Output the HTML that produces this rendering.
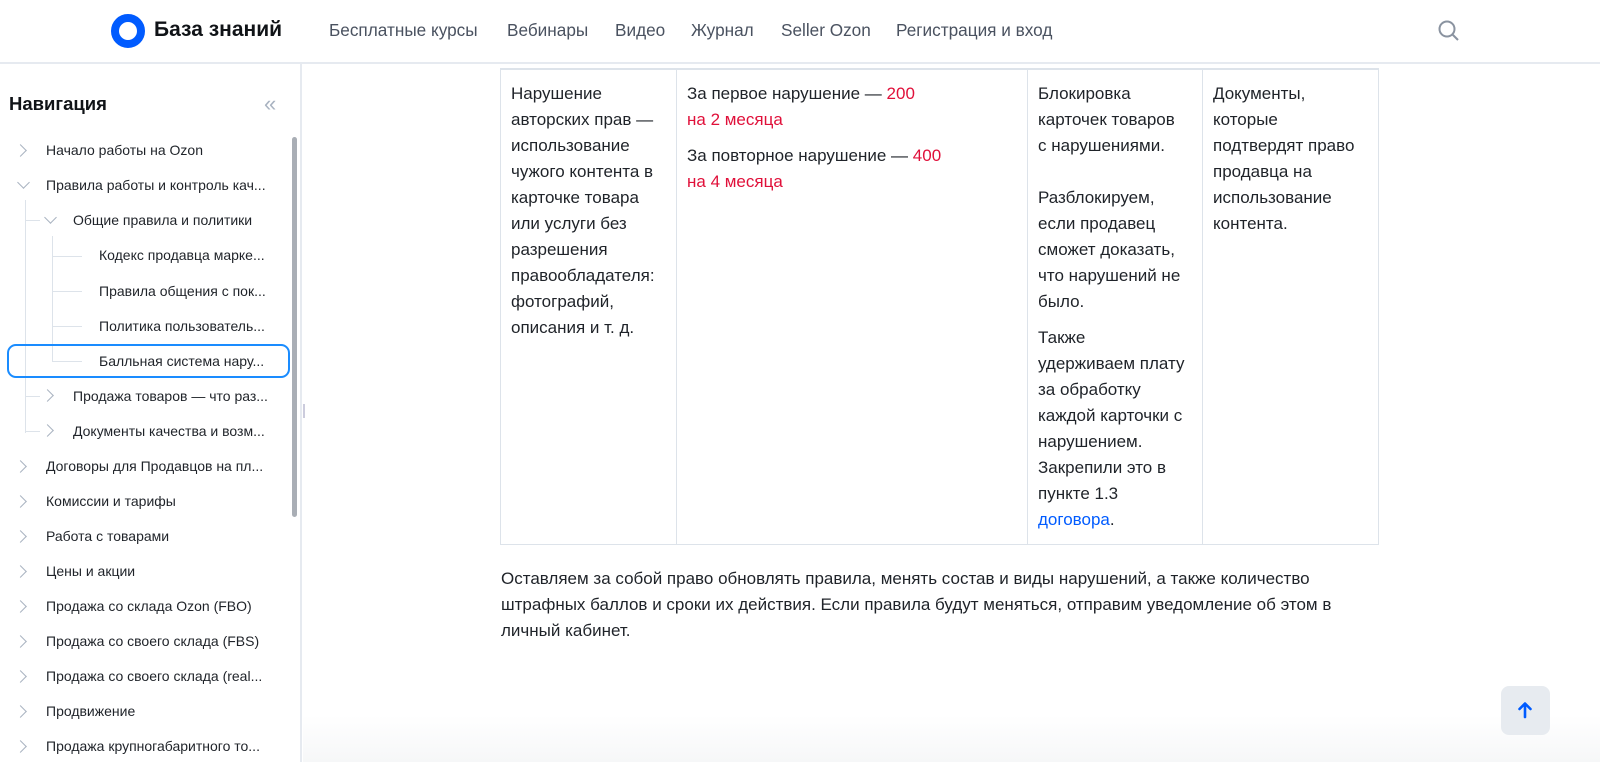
<!DOCTYPE html><html><head><meta charset="utf-8"><style>
*{margin:0;padding:0;box-sizing:border-box}
body{width:1600px;height:762px;overflow:hidden;background:#fff;font-family:"Liberation Sans",sans-serif;color:#1f2329;position:relative}
.hdr{position:absolute;left:0;top:0;width:1600px;height:64px;border-bottom:2px solid #e6eaf0;background:#fff}
.logo{position:absolute;left:111px;top:14px;width:34px;height:34px;border-radius:50%;border:8px solid #005bff}
.brand{position:absolute;left:154px;top:18px;font-size:21px;font-weight:bold;color:#101317}
.nav a{position:absolute;top:20px;font-size:17.2px;color:#4a5260;text-decoration:none;white-space:nowrap}
.side{position:absolute;left:0;top:64px;width:302px;height:698px;border-right:2px solid #e6eaf0}
.side h3{position:absolute;left:9px;top:29px;font-size:18.5px;font-weight:bold;color:#101317}
.it{position:absolute;font-size:14px;color:#1f2329;white-space:nowrap}
.chev{position:absolute;width:9px;height:9px;border-right:1.8px solid #a9b3c1;border-bottom:1.8px solid #a9b3c1}
.r{transform:rotate(-45deg)}.d{transform:rotate(45deg)}
.vl{position:absolute;border-left:1px solid #dde3ea}.hl{position:absolute;border-top:1px solid #dde3ea}
.tbl{position:absolute;left:500px;top:68px;width:879px;height:477px;border:1px solid #dde3ea;border-top:2px solid #dde3ea}
.c{position:absolute;top:0;height:100%;border-right:1px solid #dde3ea;padding:11px 10px;font-size:17px;line-height:26px;white-space:nowrap}
.red{color:#e0103a}.blue{color:#005bff}
p.t{position:absolute;left:501px;top:566px;font-size:17px;line-height:26px;white-space:nowrap}
</style></head><body>
<div class="hdr"><div class="logo"></div><div class="brand">База знаний</div>
<div class="nav"><a style="left:329px">Бесплатные курсы</a><a style="left:507px">Вебинары</a><a style="left:615px">Видео</a><a style="left:691px">Журнал</a><a style="left:781px">Seller Ozon</a><a style="left:896px">Регистрация и вход</a></div>
<svg style="position:absolute;left:1437px;top:19px" width="24" height="24" viewBox="0 0 24 24" fill="none" stroke="#8a93a0" stroke-width="2"><circle cx="10" cy="10" r="7.5"/><path d="M15.5 15.5L21 21"/></svg>
</div>
<div class="side"><h3>Навигация</h3>
<div style="position:absolute;left:264px;top:27px;font-size:22px;color:#a9b3c1">«</div>
<div style="position:absolute;left:292px;top:73px;width:5px;height:380px;background:#a9aeb5;border-radius:3px"></div>
</div>
<div class="vl" style="left:25px;top:200px;height:233px"></div>
<div class="vl" style="left:52px;top:236px;height:126px"></div>
<div class="hl" style="left:25px;top:220px;width:15px"></div>
<div class="hl" style="left:52px;top:256px;width:30px"></div>
<div class="hl" style="left:52px;top:291px;width:30px"></div>
<div class="hl" style="left:52px;top:326px;width:30px"></div>
<div class="hl" style="left:52px;top:361px;width:30px"></div>
<div class="hl" style="left:25px;top:396px;width:15px"></div>
<div class="hl" style="left:25px;top:431px;width:15px"></div>
<div style="position:absolute;left:7px;top:344px;width:283px;height:34px;border:2px solid #1a8cff;border-radius:9px"></div>
<div class="chev r" style="left:16px;top:146px"></div><div class="it" style="left:46px;top:142px">Начало работы на Ozon</div>
<div class="chev d" style="left:19px;top:178px"></div><div class="it" style="left:46px;top:177px">Правила работы и контроль кач...</div>
<div class="chev d" style="left:46px;top:213px"></div><div class="it" style="left:73px;top:212px">Общие правила и политики</div>
<div class="it" style="left:99px;top:247px">Кодекс продавца марке...</div>
<div class="it" style="left:99px;top:283px">Правила общения с пок...</div>
<div class="it" style="left:99px;top:318px">Политика пользователь...</div>
<div class="it" style="left:99px;top:353px">Балльная система нару...</div>
<div class="chev r" style="left:43px;top:391px"></div><div class="it" style="left:73px;top:388px">Продажа товаров — что раз...</div>
<div class="chev r" style="left:43px;top:426px"></div><div class="it" style="left:73px;top:423px">Документы качества и возм...</div>
<div class="chev r" style="left:16px;top:462px"></div><div class="it" style="left:46px;top:458px">Договоры для Продавцов на пл...</div>
<div class="chev r" style="left:16px;top:497px"></div><div class="it" style="left:46px;top:493px">Комиссии и тарифы</div>
<div class="chev r" style="left:16px;top:532px"></div><div class="it" style="left:46px;top:528px">Работа с товарами</div>
<div class="chev r" style="left:16px;top:567px"></div><div class="it" style="left:46px;top:563px">Цены и акции</div>
<div class="chev r" style="left:16px;top:602px"></div><div class="it" style="left:46px;top:598px">Продажа со склада Ozon (FBO)</div>
<div class="chev r" style="left:16px;top:637px"></div><div class="it" style="left:46px;top:633px">Продажа со своего склада (FBS)</div>
<div class="chev r" style="left:16px;top:672px"></div><div class="it" style="left:46px;top:668px">Продажа со своего склада (real...</div>
<div class="chev r" style="left:16px;top:707px"></div><div class="it" style="left:46px;top:703px">Продвижение</div>
<div class="chev r" style="left:16px;top:742px"></div><div class="it" style="left:46px;top:738px">Продажа крупногабаритного то...</div>
<div style="position:absolute;left:303px;top:404px;width:2px;height:14px;border-left:1px solid #ccd;border-right:1px solid #ccd"></div>
<div class="tbl">
<div class="c" style="left:0;width:176px">Нарушение<br>авторских прав —<br>использование<br>чужого контента в<br>карточке товара<br>или услуги без<br>разрешения<br>правообладателя:<br>фотографий,<br>описания и т. д.</div>
<div class="c" style="left:176px;width:351px">За первое нарушение — <span class="red">200</span><br><span class="red">на 2 месяца</span><div style="height:10px"></div>За повторное нарушение — <span class="red">400</span><br><span class="red">на 4 месяца</span></div>
<div class="c" style="left:527px;width:175px">Блокировка<br>карточек товаров<br>с нарушениями.<br><br>Разблокируем,<br>если продавец<br>сможет доказать,<br>что нарушений не<br>было.<div style="height:10px"></div>Также<br>удерживаем плату<br>за обработку<br>каждой карточки с<br>нарушением.<br>Закрепили это в<br>пункте 1.3<br><span class="blue">договора</span>.</div>
<div class="c" style="left:702px;width:176px;border-right:none">Документы,<br>которые<br>подтвердят право<br>продавца на<br>использование<br>контента.</div>
</div>
<p class="t">Оставляем за собой право обновлять правила, менять состав и виды нарушений, а также количество<br>штрафных баллов и сроки их действия. Если правила будут меняться, отправим уведомление об этом в<br>личный кабинет.</p>
<div style="position:absolute;left:303px;top:715px;width:1297px;height:47px;background:linear-gradient(#fff0,#f6f7f8)"></div>
<div style="position:absolute;left:1501px;top:686px;width:49px;height:49px;border-radius:8px;background:#e7ebf0"></div>
<svg style="position:absolute;left:1513px;top:698px" width="24" height="24" viewBox="0 0 24 24" fill="none" stroke="#005bff" stroke-width="2.6" stroke-linecap="round" stroke-linejoin="round"><path d="M12 19V6M6.5 11L12 5.5 17.5 11"/></svg>
</body></html>
